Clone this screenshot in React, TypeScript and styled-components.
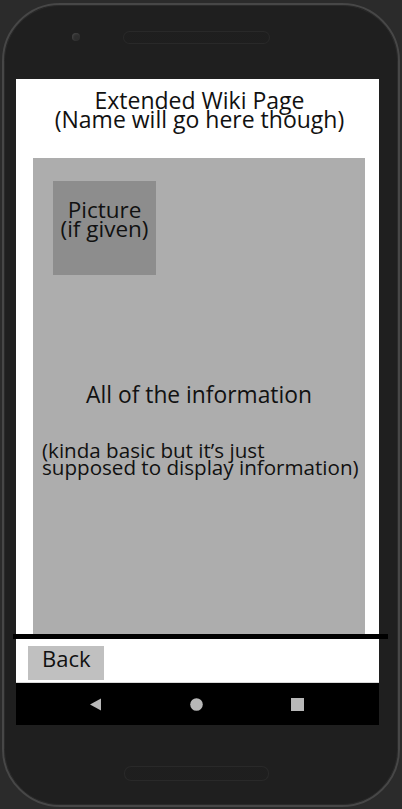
import React from "react";
import styled, { createGlobalStyle } from "styled-components";

const Global = createGlobalStyle`
  html, body { margin: 0; padding: 0; background: #2b2b2b; }
  body { font-family: "Open Sans", "Noto Sans", sans-serif; }
  * { box-sizing: border-box; }
`;

const Page = styled.div`
  width: 402px;
  height: 809px;
  padding: 3px 2px 2px 2px;
  background: #2b2b2b;
`;

const Phone = styled.div`
  width: 398px;
  height: 804px;
  border: 2px solid #474747;
  border-radius: 58px;
  background: #1f1f1f;
  display: flex;
  flex-direction: column;
  box-shadow: inset 0 0 0 1px #2a2a2a;
`;

const TopBezel = styled.div`
  height: 74px;
  position: relative;
  display: flex;
  justify-content: center;
  padding-top: 27px;
`;

const Speaker = styled.div<{ $w: number; $h: number }>`
  width: ${(p) => p.$w}px;
  height: ${(p) => p.$h}px;
  border-radius: 6px;
  background-color: #141414;
  background-image: radial-gradient(#2a2a2a 0.6px, transparent 0.8px);
  background-size: 2px 2px;
  box-shadow: 0 0 0 1px #292929;
  margin-left: -10px;
`;

const Camera = styled.div`
  position: absolute;
  left: 68px;
  top: 28px;
  width: 8px;
  height: 8px;
  border-radius: 50%;
  background: #2e2e2e;
  box-shadow: inset 1px 1px 2px #444;
`;

const Screen = styled.div`
  width: 363px;
  margin-left: 12px;
  display: flex;
  flex-direction: column;
`;

const Header = styled.div`
  height: 79px;
  background: #fff;
  display: flex;
  flex-direction: column;
  align-items: center;
  padding-top: 12px;
  padding-left: 4px;
  color: #111;
  font-size: 23px;
  line-height: 19px;
`;

const Body = styled.div`
  background: #fff;
  padding: 0 14px 0 17px;
`;

const Panel = styled.div`
  height: 476px;
  background: #adadad;
  display: flex;
  flex-direction: column;
  padding: 23px 0 0 9px;
  color: #111;
`;

const Picture = styled.div`
  width: 103px;
  height: 94px;
  margin-left: 11px;
  background: #8d8d8d;
  display: flex;
  flex-direction: column;
  align-items: center;
  padding-top: 19px;
  font-size: 22.5px;
  line-height: 19px;
`;

const InfoTitle = styled.div`
  margin-top: 107px;
  padding-right: 9px;
  text-align: center;
  font-size: 22.8px;
  line-height: 26px;
`;

const InfoText = styled.div`
  margin-top: 34px;
  font-size: 20.6px;
  line-height: 17px;
  white-space: nowrap;
`;

const Divider = styled.div`
  height: 5px;
  background: #000;
  width: 375px;
  margin-left: -3px;
`;

const Footer = styled.div`
  height: 44px;
  background: #fff;
  padding: 7px 0 0 12px;
  border-bottom: 1px solid #d8d8d8;
`;

const BackButton = styled.button`
  width: 76px;
  height: 34px;
  border: none;
  background: #c0c0c0;
  font-family: inherit;
  font-size: 22px;
  line-height: 20px;
  color: #111;
  text-align: left;
  padding: 0 0 10px 14px;
`;

const NavBar = styled.div`
  height: 42px;
  background: #000;
  display: flex;
  align-items: center;
  gap: 88px;
  padding-left: 73px;
`;

const NavIcon = styled.svg`
  width: 13px;
  height: 13px;
  display: block;
`;

const BottomBezel = styled.div`
  flex: 1;
  display: flex;
  justify-content: center;
  padding-top: 42px;
`;

export default function App() {
  return (
    <>
      <Global />
      <Page>
        <Phone>
          <TopBezel>
            <Camera />
            <Speaker $w={145} $h={11} />
          </TopBezel>
          <Screen>
            <Header>
              <div>Extended Wiki Page</div>
              <div>(Name will go here though)</div>
            </Header>
            <Body>
              <Panel>
                <Picture>
                  <div>Picture</div>
                  <div>(if given)</div>
                </Picture>
                <InfoTitle>All of the information</InfoTitle>
                <InfoText>
                  (kinda basic but it’s just
                  <br />
                  supposed to display information)
                </InfoText>
              </Panel>
            </Body>
            <Divider />
            <Footer>
              <BackButton>Back</BackButton>
            </Footer>
            <NavBar>
              <NavIcon viewBox="0 0 13 13">
                <polygon points="12,0.5 12,12.5 1,6.5" fill="#b8b8b8" />
              </NavIcon>
              <NavIcon viewBox="0 0 13 13">
                <circle cx="6.5" cy="6.5" r="6.3" fill="#b8b8b8" />
              </NavIcon>
              <NavIcon viewBox="0 0 13 13">
                <rect x="0" y="0" width="13" height="13" fill="#b8b8b8" />
              </NavIcon>
            </NavBar>
          </Screen>
          <BottomBezel>
            <Speaker $w={143} $h={13} />
          </BottomBezel>
        </Phone>
      </Page>
    </>
  );
}
